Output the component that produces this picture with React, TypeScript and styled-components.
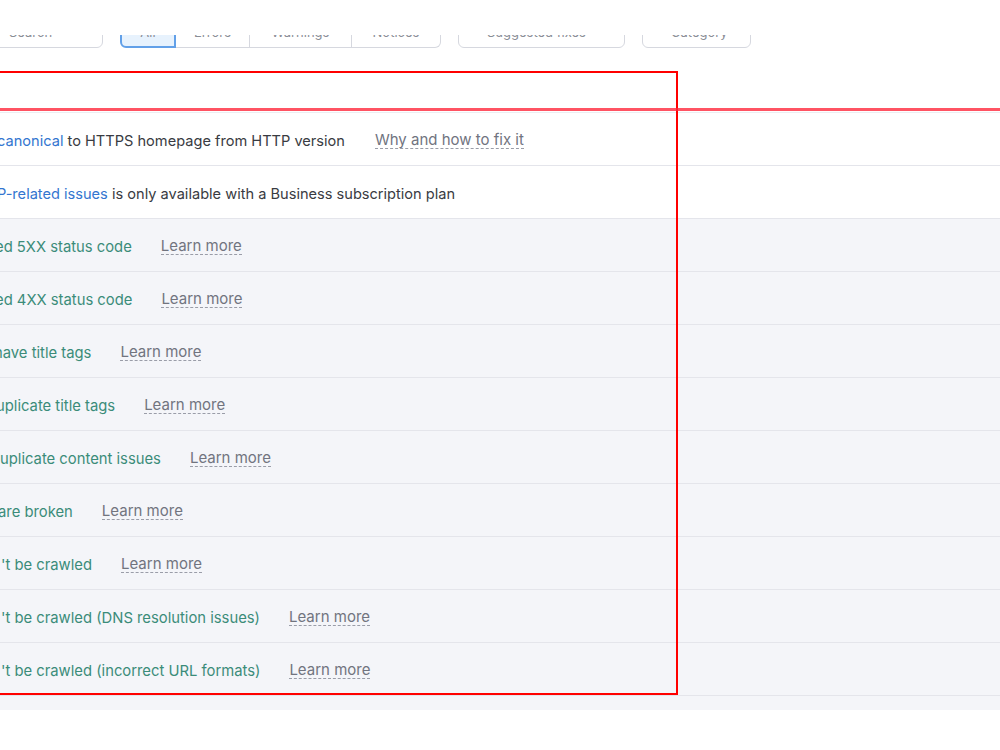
import styled, { createGlobalStyle } from "styled-components";

const Global = createGlobalStyle`
  body {
    margin: 0;
    background: #fff;
    font-family: Inter, "Noto Sans", sans-serif;
    overflow: hidden;
  }
`
const Page = styled.div`
  position: relative;
  width: 1000px;
  height: 750px;
  overflow: hidden;
  background: #fff;
`
// toolbar is scrolled mostly out of view: only the bottom strip of the buttons shows
const ToolbarClip = styled.div`
  margin-top: 35px;
  height: 13px;
  overflow: hidden;
  display: flex;
  align-items: flex-end;
`
const Toolbar = styled.div`
  display: flex;
  align-items: flex-end;
  gap: 17px;
  margin-left: -20px;
`
const Btn = styled.div<{ $w: number }>`
  box-sizing: border-box;
  width: ${(p) => p.$w}px;
  height: 32px;
  border: 1px solid #d6d8df;
  border-radius: 6px;
  display: flex;
  align-items: center;
  padding-left: 28px;
  font-size: 13px;
  color: #8a8d96;
`
const Segments = styled.div`
  display: flex;
  height: 32px;
`
const Segment = styled.div<{ $w: number; $on?: boolean; $first?: boolean; $last?: boolean }>`
  box-sizing: border-box;
  width: ${(p) => p.$w}px;
  height: 32px;
  display: flex;
  align-items: center;
  justify-content: center;
  font-size: 13px;
  color: #8a8d96;
  border: 1px solid #d6d8df;
  border-left-width: ${(p) => (p.$first ? 1 : 0)}px;
  border-radius: ${(p) => (p.$first ? "6px 0 0 6px" : p.$last ? "0 6px 6px 0" : "0")};
  ${(p) => p.$on && `
    background: #e7f2fd;
    border: 2px solid #62a0e8;
  `}
`
const Table = styled.div`
  margin-top: 64px;
  border-top: 1px solid #eceef2;
`
const Row = styled.div<{ $muted?: boolean }>`
  height: 49px;
  padding-top: 3px;
  border-bottom: 1px solid #e4e5eb;
  background: ${(p) => (p.$muted ? "#f4f5f9" : "#fff")};
  display: flex;
  align-items: center;
  font-size: 14.6px;
  white-space: nowrap;
`
// $cut: how far the (horizontally scrolled) text sits past the left edge
const Text = styled.span<{ $tone: "dark" | "green"; $cut: number }>`
  margin-left: ${(p) => -p.$cut}px;
  font-size: ${(p) => (p.$tone === "green" ? "14.8px" : "14.6px")};
  color: ${(p) => (p.$tone === "green" ? "#3b8c79" : "#393b42")};
`
const Blue = styled.span`
  color: #3376d0;
`
const Hint = styled.span<{ $gap: number }>`
  margin-left: ${(p) => p.$gap}px;
  font-size: 15px;
  color: #71747f;
  border-bottom: 1px dashed #9a9da8;
  line-height: 16px;
`
const Footer = styled.div`
  height: 14px;
  background: #f4f5f9;
`
const Frame = styled.div`
  position: absolute;
  left: -10px;
  top: 71px;
  width: 684px;
  height: 620px;
  border: 2px solid #ff0000;
  pointer-events: none;
`
const Mark = styled.div`
  position: absolute;
  left: 0;
  right: 0;
  top: 108px;
  height: 3px;
  background: rgba(255, 40, 60, 0.8);
`

const issues: [string, number][] = [
  ["ed 5XX status code", 5],
  ["ed 4XX status code", 5],
  ["have title tags", 6],
  ["uplicate title tags", 4],
  ["uplicate content issues", 0],
  ["are broken", 2],
  ["'t be crawled", -1],
  ["'t be crawled (DNS resolution issues)", -1],
  ["'t be crawled (incorrect URL formats)", -1],
]

function App() {
  return (
    <Page>
      <Global />
      <ToolbarClip>
        <Toolbar>
          <Btn $w={123}>Search</Btn>
          <Segments>
            <Segment $w={56} $on $first>All</Segment>
            <Segment $w={74}>Errors</Segment>
            <Segment $w={102}>Warnings</Segment>
            <Segment $w={89} $last>Notices</Segment>
          </Segments>
          <Btn $w={167}>Suggested fixes</Btn>
          <Btn $w={109}>Category</Btn>
        </Toolbar>
      </ToolbarClip>
      <Table>
        <Row>
          <Text $tone="dark" $cut={3}><Blue>canonical</Blue> to HTTPS homepage from HTTP version</Text>
          <Hint $gap={30}>Why and how to fix it</Hint>
        </Row>
        <Row>
          <Text $tone="dark" $cut={3}><Blue>P-related issues</Blue> is only available with a Business subscription plan</Text>
        </Row>
        {issues.map(([t, cut]) => (
          <Row key={t} $muted>
            <Text $tone="green" $cut={cut}>{t}</Text>
            <Hint $gap={29}>Learn more</Hint>
          </Row>
        ))}
        <Footer />
      </Table>
      <Frame />
      <Mark />
    </Page>
  )
}
export default App;
